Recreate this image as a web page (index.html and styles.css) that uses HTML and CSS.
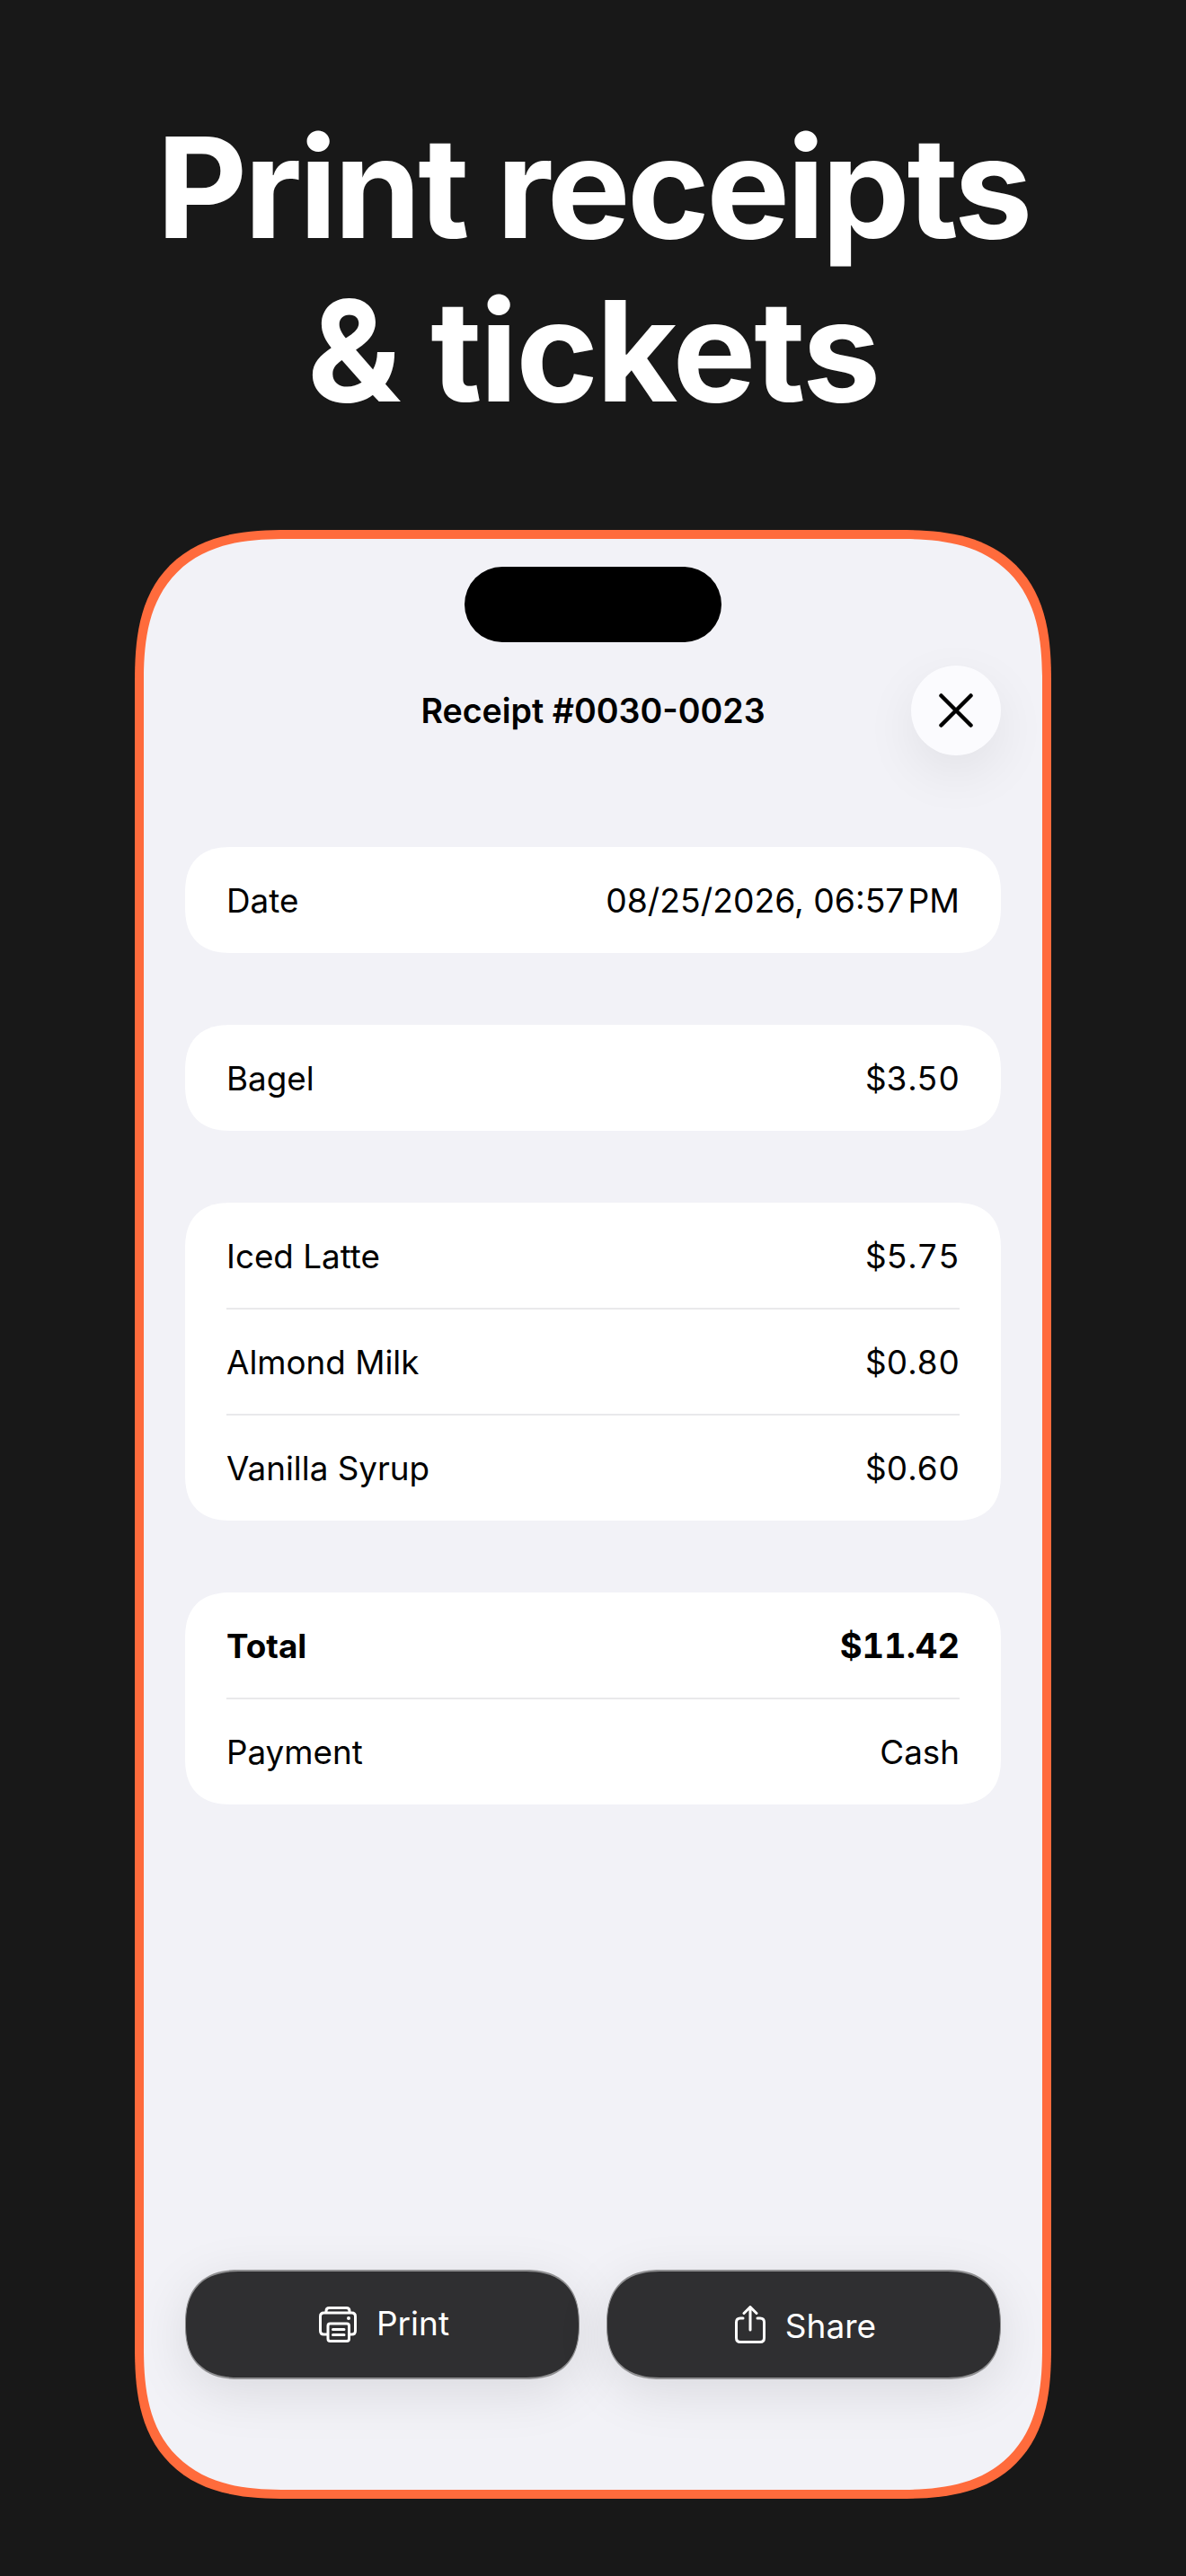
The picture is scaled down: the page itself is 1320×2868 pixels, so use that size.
FILE: index.html
```html
<!DOCTYPE html>
<html lang="en">
<head>
<meta charset="utf-8">
<title>Print receipts &amp; tickets</title>
<link rel="stylesheet" href="styles.css">
</head>
<body>
<h1 class="headline"><span class="line-one">Print receipts</span><span class="line-two">&amp; tickets</span></h1>
<main class="phone">
  <div class="island"></div>
  <header class="sheet-header">
    <h2 class="sheet-title">Receipt #0030-0023</h2>
    <button class="close" aria-label="Close">
      <svg class="close-icon" viewBox="0 0 38 38"><path d="M2.500 2.500 35.500 35.500M35.500 2.500 2.500 35.500"/></svg>
    </button>
  </header>
  <section class="cards">
    <div class="card">
      <div class="row"><span>Date</span><span class="date">08/25/2026, 06:57<span class="thin-gap"></span>PM</span></div>
    </div>
    <div class="card">
      <div class="row"><span>Bagel</span><span class="amount">$3.50</span></div>
    </div>
    <div class="card">
      <div class="row"><span>Iced Latte</span><span class="amount">$5.75</span></div>
      <div class="row"><span>Almond Milk</span><span class="amount">$0.80</span></div>
      <div class="row"><span>Vanilla Syrup</span><span class="amount">$0.60</span></div>
    </div>
    <div class="card">
      <div class="row total"><span>Total</span><span class="amount">$11.42</span></div>
      <div class="row"><span>Payment</span><span>Cash</span></div>
    </div>
  </section>
  <footer class="actions">
    <button class="action">
      <svg class="print-icon" viewBox="0 0 42 40"><path d="M8 7V5Q8 1.500 11.500 1.500H30.500Q34 1.500 34 5V7M9 31H5.500Q1.500 31 1.500 27V11Q1.500 7 5.500 7H36.500Q40.500 7 40.500 11V27Q40.500 31 36.500 31H34M12.500 38.500H31Q33.500 38.500 33.500 36V21.500Q33.500 19 31 19H12.500Q10 19 10 21.500V36Q10 38.500 12.500 38.500ZM15.500 25.500H28M15.500 31.500H28"/><circle class="dot" cx="33" cy="13" r="2"/></svg>
      <span class="print-label">Print</span>
    </button>
    <button class="action">
      <svg class="share-icon" viewBox="0 0 34 42"><path d="M9 14H6Q1.500 14 1.500 18.500V36Q1.500 40.500 6 40.500H28Q32.500 40.500 32.500 36V18.500Q32.500 14 28 14H25M17 27V2M10 8.500 17 1.500 24 8.500"/></svg>
      <span class="share-label">Share</span>
    </button>
  </footer>
</main>
</body>
</html>
```
FILE: styles.css
```css
* { box-sizing: border-box; }
html, body { margin: 0; padding: 0; }
body {
  width: 1320px;
  height: 2868px;
  background: #181818;
  font-family: Inter, "Liberation Sans", sans-serif;
  overflow: hidden;
  padding-top: 118px;
}
.headline {
  margin: 0;
  height: 472px;
  color: #fff;
  font-size: 156px;
  line-height: 182px;
  font-weight: 700;
  text-align: center;
}
.line-one { display: block; letter-spacing: -3.5px; }
.line-two { display: block; letter-spacing: -2.2px; }
.phone {
  position: relative;
  width: 1020px;
  height: 2192px;
  margin: 0 auto;
  padding: 0 46px;
  background: #f2f2f7;
  border: 10px solid #ff6b3c;
  border-radius: 170px;
  corner-shape: superellipse(1.4);
  display: flex;
  flex-direction: column;
}
.island {
  position: absolute;
  top: 31px;
  left: 357px;
  width: 286px;
  height: 84px;
  border-radius: 42px;
  background: #000;
}
.sheet-header {
  height: 343px;
  padding-top: 141px;
  display: flex;
  justify-content: flex-end;
  align-items: flex-start;
  position: relative;
}
.sheet-title {
  position: absolute;
  left: 0;
  right: 0;
  top: 171px;
  margin: 0;
  text-align: center;
  font-size: 37.6px;
  line-height: 42px;
  font-weight: 600;
  color: #000;
}
.close {
  width: 100px;
  height: 100px;
  padding: 0;
  border: 0;
  border-radius: 50%;
  background: #fbfbfe;
  box-shadow: 0 20px 60px rgba(0, 0, 0, 0.07);
  display: flex;
  align-items: center;
  justify-content: center;
}
.close-icon { width: 38px; height: 38px; }
.close-icon path { fill: none; stroke: #000; stroke-width: 4.5; stroke-linecap: round; }
.cards { display: flex; flex-direction: column; gap: 80px; }
.card {
  background: #fff;
  border-radius: 52px;
  corner-shape: superellipse(1.3);
  padding: 0 46px;
}
.row {
  height: 118px;
  display: flex;
  justify-content: space-between;
  align-items: center;
  font-size: 36.8px;
  color: #000;
}
.row + .row { margin-top: -1px; height: 119px; border-top: 2px solid #e9e9eb; }
.amount { font-variant-numeric: tabular-nums; }
.date { font-size: 37.3px; }
.total { font-weight: 700; }
.total .amount { font-size: 38px; }
.thin-gap { display: inline-block; width: 4px; }
.actions {
  position: absolute;
  left: 46px;
  right: 46px;
  top: 1927px;
  display: flex;
  gap: 30px;
}
.action {
  flex: 1;
  height: 122px;
  padding: 0 0 0 4px;
  border: 2px solid #8f8f91;
  border-width: 2px 1px;
  border-radius: 61px;
  corner-shape: superellipse(1.3);
  background: #2f2f31;
  color: #fff;
  font-family: inherit;
  font-size: 37px;
  display: flex;
  align-items: center;
  justify-content: center;
  gap: 22px;
  box-shadow: 0 14px 60px rgba(0, 0, 0, 0.1);
}
.print-label { margin-bottom: 3px; }
.share-label { margin-top: 3px; }
.print-icon { width: 42px; height: 40px; }
.share-icon { width: 34px; height: 42px; }
.print-icon path, .share-icon path { fill: none; stroke: #fff; stroke-width: 3; stroke-linecap: round; stroke-linejoin: round; }
.dot { fill: #fff; }
```
